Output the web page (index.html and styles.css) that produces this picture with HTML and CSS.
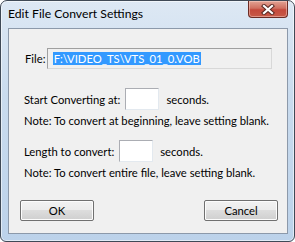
FILE: index.html
```html
<!DOCTYPE html>
<html>
<head>
<meta charset="utf-8">
<link rel="stylesheet" href="styles.css">
</head>
<body>
<div class="window">
  <div class="titlebar">
    <span class="title">Edit File Convert Settings</span>
    <div class="close">
      <svg width="14" height="11" viewBox="0 0 14 11">
        <path d="M3 2 L11 9 M11 2 L3 9" stroke="#5a2a24" stroke-width="4.2" stroke-linecap="square" fill="none"/>
        <path d="M3 2 L11 9 M11 2 L3 9" stroke="#ffffff" stroke-width="2.2" stroke-linecap="square" fill="none"/>
      </svg>
    </div>
  </div>
  <div class="client">
    <div class="row file-row">
      <span class="lbl">File:</span>
      <div class="field"><span class="sel">F:\VIDEO_TS\VTS_01_0.VOB</span></div>
    </div>
    <div class="row start-row">
      <span class="lbl">Start Converting at:</span>
      <div class="box"></div>
      <span class="unit">seconds.</span>
    </div>
    <div class="note">Note: To convert at beginning, leave setting blank.</div>
    <div class="row len-row">
      <span class="lbl">Length to convert:</span>
      <div class="box"></div>
      <span class="unit">seconds.</span>
    </div>
    <div class="note">Note: To convert entire file, leave setting blank.</div>
    <div class="buttons">
      <div class="btn">OK</div>
      <div class="btn">Cancel</div>
    </div>
  </div>
</div>
</body>
</html>
```

FILE: styles.css
```css
html, body {
  margin: 0;
  padding: 0;
  background: #ffffff;
}
body {
  font-family: "Lato", "Noto Sans", sans-serif;
  font-size: 11.25px;
  color: #000;
  white-space: nowrap;
}
.window {
  box-sizing: border-box;
  width: 295px;
  height: 242px;
  border: 1px solid #3f4956;
  border-radius: 7px 7px 6px 6px;
  background: linear-gradient(#dde8f4, #c9dbee 40%, #bcd2ea);
  box-shadow: inset 0 0 0 1px rgba(255,255,255,0.55);
  display: flex;
  flex-direction: column;
  padding: 0 6px 7px 7px;
}
.titlebar {
  height: 27px;
  display: flex;
  align-items: flex-start;
}
.title {
  font-size: 12.2px;
  padding-top: 5px;
  color: #000;
}
.close {
  margin-left: auto;
  width: 40px;
  height: 17px;
  box-sizing: border-box;
  border: 1px solid #6b2b24;
  border-top: none;
  border-radius: 0 0 4px 4px;
  background: linear-gradient(#e2a394, #d07060 45%, #c4493b 55%, #c75a48);
  box-shadow: inset 0 0 0 1px rgba(255,220,210,0.45);
  display: flex;
  align-items: center;
  justify-content: center;
}
.close svg { display: block; }
.client {
  flex: 1;
  background: #f0f0f0;
  border: 1px solid #8c99aa;
  padding: 0 15px;
  display: flex;
  flex-direction: column;
}
.row {
  display: flex;
  align-items: center;
}
.file-row {
  margin-top: 19px;
  height: 21px;
}
.file-row .lbl {
  width: 22px;
  margin-left: 1px;
}
.field {
  box-sizing: border-box;
  width: 229px;
  height: 21px;
  border: 1px solid #a0a0a0;
  border-right-color: #d8d8d8;
  border-bottom-color: #d8d8d8;
  background: #f0f0f0;
  padding: 3px 0 0 5px;
  display: flex;
  align-items: flex-start;
}
.sel {
  background: #3399ff;
  color: #fff;
  line-height: 13px;
  height: 13px;
  padding: 0 1px;
}
.start-row {
  margin-top: 19px;
  height: 22px;
}
.start-row .lbl, .len-row .lbl { margin-right: 5px; }
.box {
  box-sizing: border-box;
  width: 34px;
  height: 22px;
  background: #fff;
  border: 1px solid #abadb3;
  border-right-color: #e3e9ef;
  border-bottom-color: #e3e9ef;
}
.unit { margin-left: 7px; }
.note {
  margin-top: 3px;
  height: 16px;
  line-height: 16px;
}
.len-row {
  margin-top: 11px;
  height: 22px;
}
.buttons {
  margin-top: 19px;
  display: flex;
  justify-content: space-between;
  margin-left: -4px;
  margin-right: -6px;
}
.btn {
  box-sizing: border-box;
  width: 74px;
  height: 21px;
  border: 1px solid #707070;
  border-radius: 2px;
  background: linear-gradient(#f2f2f2, #ebebeb 50%, #dddddd 50%, #cfcfcf);
  box-shadow: inset 0 0 0 1px #fcfcfc;
  display: flex;
  align-items: center;
  justify-content: center;
}
```
